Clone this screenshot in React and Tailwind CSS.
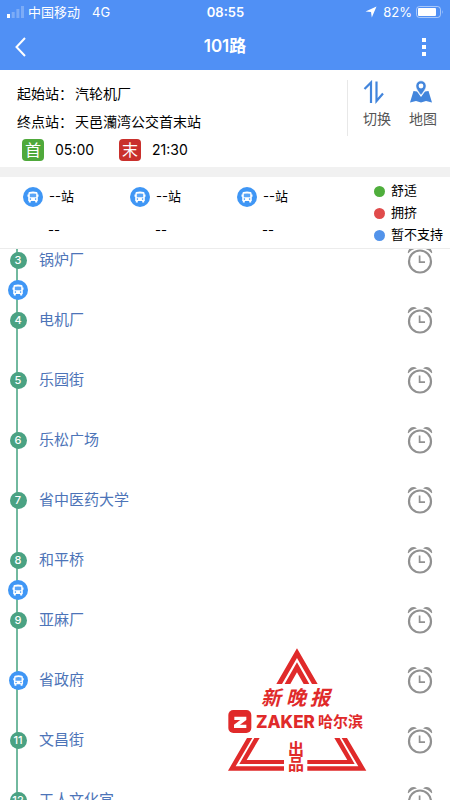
import { useState } from "react";

const stations = [
  { no: 3, name: "锅炉厂", busAfter: true },
  { no: 4, name: "电机厂" },
  { no: 5, name: "乐园街" },
  { no: 6, name: "乐松广场" },
  { no: 7, name: "省中医药大学" },
  { no: 8, name: "和平桥", busAfter: true },
  { no: 9, name: "亚麻厂" },
  { no: 10, name: "省政府", busHere: true },
  { no: 11, name: "文昌街" },
  { no: 12, name: "工人文化宫" },
];

const legend = [
  { label: "舒适", color: "bg-[#4fae3c]" },
  { label: "拥挤", color: "bg-[#e04b4b]" },
  { label: "暂不支持", color: "bg-[#5293ea]" },
];

const BusIcon = ({ className }) => (
  <svg viewBox="0 0 20 20" className={className} aria-hidden="true">
    <circle cx="10" cy="10" r="10" fill="#3f96f5" />
    <path
      d="M6.4 5 Q10 3.8 13.6 5 Q14.6 5.3 14.6 6.5 V7.6 H15.5 V9.8 H14.8 V14 H14.2 V15.5 H12.2 V14 H7.8 V15.5 H5.8 V14 H5.2 V9.8 H4.5 V7.6 H5.4 V6.5 Q5.4 5.3 6.4 5 Z"
      fill="#fff"
    />
    <path d="M6.8 6.8 Q10 6 13.2 6.8 V10.2 H6.8 Z" fill="#5aa5f7" />
    <circle cx="7.4" cy="12.1" r="0.8" fill="#3f96f5" />
    <circle cx="12.6" cy="12.1" r="0.8" fill="#3f96f5" />
  </svg>
);

const AlarmIcon = () => (
  <svg viewBox="0 0 28 28" className="w-7 h-7" aria-hidden="true">
    <circle cx="14" cy="15.5" r="11" fill="none" stroke="#919191" strokeWidth="2.2" />
    <path d="M13.6 9.5 V16.2 H19" fill="none" stroke="#919191" strokeWidth="1.7" />
    <path d="M1.8 6.6 Q2 3.6 4.6 1.8 Q7.8 -0.2 11 2.4 Q5.6 3.2 2.6 7 Q1.9 7.4 1.8 6.6 Z" fill="#919191" />
    <path d="M26.2 6.6 Q26 3.6 23.4 1.8 Q20.2 -0.2 17 2.4 Q22.4 3.2 25.4 7 Q26.1 7.4 26.2 6.6 Z" fill="#919191" />
  </svg>
);

const StatusBar = () => (
  <div className="grid grid-cols-3 items-center h-6 pl-[7px] pr-[6px] text-[13px] leading-6">
    <div className="flex items-center whitespace-nowrap">
      <svg viewBox="0 0 17 12" className="w-[17px] h-3 mr-1" aria-hidden="true">
        <rect x="0" y="8" width="3" height="4" fill="#fff" />
        <rect x="4.7" y="6" width="3" height="6" fill="#fff" opacity="0.25" />
        <rect x="9.4" y="3" width="3" height="9" fill="#fff" opacity="0.25" />
        <rect x="14" y="0" width="3" height="12" fill="#fff" opacity="0.25" />
      </svg>
      <span>中国移动</span>
      <span className="ml-3">4G</span>
    </div>
    <div className="text-center font-semibold">08:55</div>
    <div className="flex items-center justify-end">
      <svg viewBox="0 0 12 12" className="w-3 h-3 mr-[6px]" aria-hidden="true">
        <path d="M11.5 0.5 L6.8 11.5 L6 6 L0.5 5.6 Z" fill="#fff" />
      </svg>
      <span className="mr-1">82%</span>
      <svg viewBox="0 0 28 12" className="w-7 h-3" aria-hidden="true">
        <rect x="0.5" y="0.5" width="24" height="11" rx="3" fill="none" stroke="#fff" opacity="0.5" />
        <rect x="2" y="2" width="18" height="8" rx="1" fill="#fff" />
        <path d="M26 4 Q27.5 6 26 8 Z" fill="#fff" opacity="0.5" />
      </svg>
    </div>
  </div>
);

const Header = () => (
  <header className="bg-[#5090f5] text-white">
    <StatusBar />
    <div className="grid grid-cols-3 items-center h-[46px] px-3">
      <button type="button" aria-label="返回" className="w-5 h-6 justify-self-start">
        <svg viewBox="0 0 20 24" className="w-5 h-6" fill="none" stroke="#fff" strokeWidth="2">
          <path d="M13 3 L4.5 12 L13 21" />
        </svg>
      </button>
      <h1 className="text-center text-[17px] font-semibold">101路</h1>
      <button type="button" aria-label="更多" className="flex flex-col items-center gap-[3px] w-7 justify-self-end">
        <span className="w-1 h-1 bg-white"></span>
        <span className="w-1 h-1 bg-white"></span>
        <span className="w-1 h-1 bg-white"></span>
      </button>
    </div>
  </header>
);

const RouteInfo = ({ reversed, onSwitch }) => {
  const ends = ["汽轮机厂", "天邑灡湾公交首末站"];
  const [start, end] = reversed ? [ends[1], ends[0]] : ends;

  return (
    <section className="flex items-start justify-between pl-[17px] pr-[13px] pt-[10px] pb-[3px] border-b-[10px] border-[#f1f1f1] text-sm text-black">
      <div>
        <p className="flex gap-[2px] leading-7">
          <span>起始站：</span>
          <span>{start}</span>
        </p>
        <p className="flex gap-[2px] leading-7">
          <span>终点站：</span>
          <span>{end}</span>
        </p>
        <div className="flex items-center h-7 pl-[5px]">
          <span className="w-[22px] h-[22px] rounded-sm bg-[#4fa93b] text-white text-base leading-[22px] text-center">首</span>
          <span className="ml-[11px] w-16">05:00</span>
          <span className="w-[22px] h-[22px] rounded-sm bg-[#c9302c] text-white text-base leading-[22px] text-center">末</span>
          <span className="ml-[11px]">21:30</span>
        </div>
      </div>
      <div className="flex gap-[18px] h-14 pl-[15px] border-l border-[#e8e8e8] text-[#555]">
        <button type="button" onClick={onSwitch} className="flex flex-col items-start">
          <svg viewBox="0 0 24 24" className="w-6 h-6" fill="none" stroke="#4285dc" strokeWidth="2.2" aria-hidden="true">
            <path d="M1.5 9 L8 2.5 V23" />
            <path d="M13.5 1.5 V21 L20 13.5" />
          </svg>
          <span className="mt-[3px] leading-6">切换</span>
        </button>
        <button type="button" className="flex flex-col items-start">
          <svg viewBox="0 0 24 24" className="w-6 h-6" aria-hidden="true">
            <path d="M4.5 11 L8 11.6 L12 17 L16 11.6 L19.5 11 L23 22.5 L17 21 L12 22.5 L7 21 L1 22.5 Z" fill="#4285dc" />
            <path
              d="M12 0.8 A5.1 5.1 0 0 1 17.1 5.9 C17.1 9.4 12 15 12 15 C12 15 6.9 9.4 6.9 5.9 A5.1 5.1 0 0 1 12 0.8 Z"
              fill="#4285dc"
              stroke="#fff"
              strokeWidth="0.6"
            />
            <circle cx="12" cy="6" r="2.4" fill="#fff" />
          </svg>
          <span className="mt-[3px] leading-6">地图</span>
        </button>
      </div>
    </section>
  );
};

const ArrivalPanel = () => (
  <section className="flex justify-between pl-[23px] pr-[6px] border-b border-[#ececec] text-[13px] text-black">
    <div className="flex gap-[55px]">
      {[1, 2, 3].map((n) => (
        <div key={n} className="w-[52px] pt-2">
          <div className="flex items-center gap-[6px] h-6 whitespace-nowrap">
            <BusIcon className="w-5 h-5 shrink-0" />
            <span>--站</span>
          </div>
          <p className="pl-[10px] pt-[9px] text-center leading-6">--</p>
        </div>
      ))}
    </div>
    <ul className="pt-[3px] pb-[2px] w-[70px]">
      {legend.map((item) => (
        <li key={item.label} className="flex items-center gap-[6px] h-[22px] whitespace-nowrap">
          <span className={`w-[11px] h-[11px] rounded-full shrink-0 ${item.color}`}></span>
          {item.label}
        </li>
      ))}
    </ul>
  </section>
);

const StationRow = ({ station }) => (
  <li className="relative flex items-center h-[60px] pr-4">
    <span className="absolute left-4 top-0 bottom-0 w-[2px] bg-[#72b99f]"></span>
    <div className="relative flex justify-center w-9">
      {station.busHere ? (
        <BusIcon className="w-[19px] h-[19px]" />
      ) : (
        <span className="w-[17px] h-[17px] rounded-full bg-[#4aa283] text-white text-[11px] font-medium leading-[17px] text-center">
          {station.no}
        </span>
      )}
    </div>
    <span className="flex-1 pl-[3px] text-[15px] text-[#4d74b8]">{station.name}</span>
    <button type="button" aria-label={`${station.name}到站提醒`}>
      <AlarmIcon />
    </button>
    {station.busAfter && (
      <span className="absolute left-2 -bottom-[10px] z-10">
        <BusIcon className="w-5 h-5" />
      </span>
    )}
  </li>
);

const Watermark = () => (
  <svg
    viewBox="0 0 160 140"
    className="absolute right-[75px] bottom-5 w-40 h-[140px] pointer-events-none"
    fill="#e02a2a"
  >
    <g transform="scale(0.3333)">
      <path d="M246 25 L308 132 H291 L246 54 L201 132 H184 Z" />
      <path d="M246 67 L283 132 H266 L246 97 L226 132 H209 Z" />
      <path d="M96 294 H112 L62 379 H207 V392 H39 Z" />
      <path d="M118 294 H134 L95 360 H207 V372 H73 Z" />
      <path d="M396 294 H380 L430 379 H277 V392 H454 Z" />
      <path d="M374 294 H358 L397 360 H277 V372 H419 Z" />
      <rect x="40" y="210" width="69" height="69" rx="15" />
      <path d="M58 230 H94 V240 L75 254 H94 V264 H57 V254 L76 240 H58 Z" fill="#fff" />
    </g>
    <text textAnchor="middle" fontSize="20" fontWeight="700" fontStyle="italic">
      <tspan x="56" y="65">新</tspan>
      <tspan x="81" y="65">晚</tspan>
      <tspan x="105" y="65">报</tspan>
    </text>
    <text x="41" y="88" fontSize="17" fontWeight="800">ZAKER</text>
    <text x="103" y="87" fontSize="15" fontWeight="700">哈尔滨</text>
    <text textAnchor="middle" fontSize="16" fontWeight="700">
      <tspan x="81" y="115">出</tspan>
      <tspan x="81" y="130">品</tspan>
    </text>
  </svg>
);

const App = () => {
  const [reversed, setReversed] = useState(false);

  return (
    <div className="relative flex flex-col h-screen overflow-hidden bg-white font-[Inter,'Noto_Sans_CJK_SC',sans-serif]">
      <Header />
      <RouteInfo reversed={reversed} onSwitch={() => setReversed(!reversed)} />
      <ArrivalPanel />
      <main className="flex-1 min-h-0 overflow-hidden">
        <ul className="-mt-[19px]">
          {stations.map((station) => (
            <StationRow key={station.no} station={station} />
          ))}
        </ul>
      </main>
      <Watermark />
    </div>
  );
};

export default App;
